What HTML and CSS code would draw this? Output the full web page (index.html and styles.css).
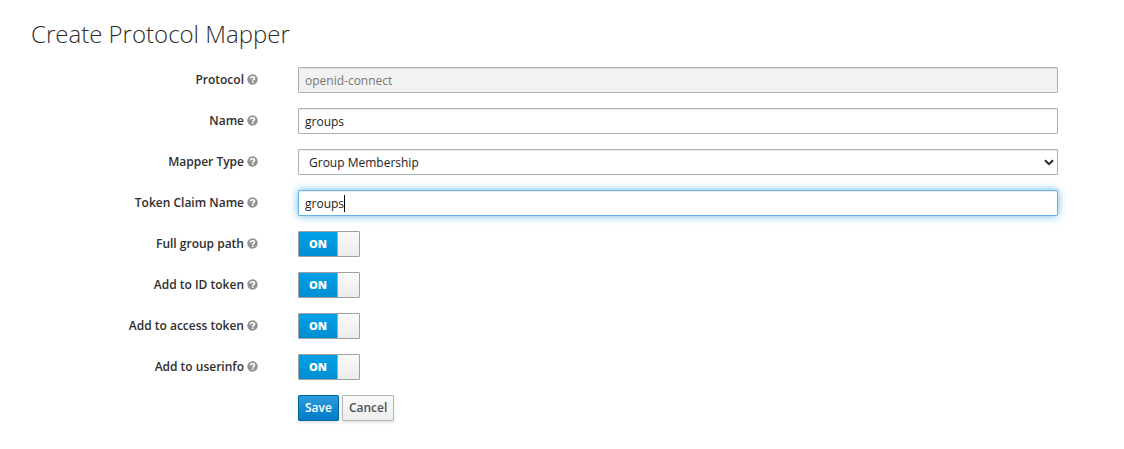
FILE: index.html
```html
<!DOCTYPE html>
<html lang="en">
<head>
<meta charset="utf-8">
<meta name="viewport" content="width=device-width, initial-scale=1">
<title>Create Protocol Mapper</title>
<link rel="stylesheet" href="styles.css">
</head>
<body>
<svg class="sprite" aria-hidden="true">
  <symbol id="help" viewBox="0 0 22 22">
    <circle cx="11" cy="11" r="10.400" fill="#939393"/>
    <path d="M6.600 8.600C7 6.200 8.600 5.400 11 5.400c2.400 0 4 1.200 4 3 0 2.600-3.600 2.600-3.600 5.200" fill="none" stroke="#fff" stroke-width="3.200"/>
    <rect x="9.800" y="14.800" width="3.200" height="3" fill="#fff"/>
  </symbol>
</svg>
<main class="page">
  <h1 class="title">Create Protocol Mapper</h1>
  <form class="form">
    <div class="row">
      <div class="caption"><label for="protocol">Protocol</label><svg class="help"><use href="#help"/></svg></div>
      <input class="field" id="protocol" type="text" value="openid-connect" disabled>
    </div>
    <div class="row">
      <div class="caption"><label for="name">Name</label><svg class="help"><use href="#help"/></svg></div>
      <input class="field" id="name" type="text" value="groups">
    </div>
    <div class="row">
      <div class="caption"><label for="type">Mapper Type</label><svg class="help"><use href="#help"/></svg></div>
      <div class="control">
        <select class="field field-select" id="type"><option>Group Membership</option></select>
        <svg class="chevron" viewBox="0 0 10 7" aria-hidden="true"><path d="M1 1.200L5 5.200L9 1.200" fill="none" stroke="#2b2b2b" stroke-width="2"/></svg>
      </div>
    </div>
    <div class="row">
      <div class="caption"><label for="claim">Token Claim Name</label><svg class="help"><use href="#help"/></svg></div>
      <div class="control">
        <input class="field field-active" id="claim" type="text" value="groups">
        <span class="caret" aria-hidden="true"></span>
      </div>
    </div>
    <div class="row">
      <div class="caption"><label for="path">Full group path</label><svg class="help"><use href="#help"/></svg></div>
      <div class="switch"><input class="switch-input" id="path" type="checkbox" checked><span class="switch-on">ON</span><span class="switch-knob"></span></div>
    </div>
    <div class="row">
      <div class="caption"><label for="idtoken">Add to ID token</label><svg class="help"><use href="#help"/></svg></div>
      <div class="switch"><input class="switch-input" id="idtoken" type="checkbox" checked><span class="switch-on">ON</span><span class="switch-knob"></span></div>
    </div>
    <div class="row">
      <div class="caption"><label for="access">Add to access token</label><svg class="help"><use href="#help"/></svg></div>
      <div class="switch"><input class="switch-input" id="access" type="checkbox" checked><span class="switch-on">ON</span><span class="switch-knob"></span></div>
    </div>
    <div class="row">
      <div class="caption"><label for="userinfo">Add to userinfo</label><svg class="help"><use href="#help"/></svg></div>
      <div class="switch"><input class="switch-input" id="userinfo" type="checkbox" checked><span class="switch-on">ON</span><span class="switch-knob"></span></div>
    </div>
    <div class="row">
      <span></span>
      <div class="actions">
        <button class="btn btn-primary" type="button">Save</button>
        <button class="btn" type="button">Cancel</button>
      </div>
    </div>
  </form>
</main>
</body>
</html>
```
FILE: styles.css
```css
* { box-sizing: border-box; }
body {
  margin: 0;
  background: #fff;
  color: #2e2e2e;
  font: 12px/20px "Open Sans", "Noto Sans", sans-serif;
}
.sprite { position: absolute; width: 0; height: 0; }
.page { padding: 20px 66px 28px 31px; }
.title { margin: 0 0 19px; font-size: 24px; line-height: 28px; font-weight: 300; }
.form { display: flex; flex-direction: column; gap: 15px; }
.row {
  display: grid;
  grid-template-columns: 227px minmax(0, 1fr);
  column-gap: 40px;
  min-height: 26px;
}
.caption {
  display: flex;
  align-items: center;
  justify-content: flex-end;
  gap: 3px;
  font-weight: 600;
}
.help { width: 11px; height: 11px; margin-bottom: 1px; }
.field {
  display: block;
  width: 100%;
  height: 26px;
  padding: 2px 6px;
  border: 1px solid #b0b0b0;
  border-radius: 1px;
  background: #fff;
  box-shadow: inset 0 1px 1px rgba(0, 0, 0, .075);
  color: #222;
  font: inherit;
  outline: 0;
}
.field:disabled { background: #f2f2f2; color: #777; }
.field-active {
  border-color: #66b4e3;
  box-shadow: inset 0 1px 1px rgba(0, 0, 0, .075), 0 0 8px rgba(0, 136, 206, .6);
}
.control { position: relative; }
.caret {
  position: absolute;
  top: 5px;
  left: 46px;
  width: 1px;
  height: 17px;
  background: #000;
  pointer-events: none;
}
.control:focus-within .caret { display: none; }
.field-select { appearance: none; padding: 3px 24px 3px 10px; }
.chevron {
  position: absolute;
  top: 10px;
  right: 4px;
  width: 10px;
  height: 7px;
  pointer-events: none;
}
.switch {
  position: relative;
  display: flex;
  width: 62px;
  height: 26px;
  border: 1px solid #a0a0a0;
  border-radius: 1px;
  overflow: hidden;
}
.switch-input {
  position: absolute;
  inset: 0;
  width: 100%;
  height: 100%;
  margin: 0;
  opacity: 0;
  cursor: pointer;
}
.switch-on {
  flex: 1;
  background: linear-gradient(#00a0e8, #008fd3);
  color: #fff;
  font-size: 11px;
  line-height: 24px;
  font-weight: 800;
  text-align: center;
}
.switch-knob {
  width: 22px;
  border-left: 1px solid #a8a8a8;
  background: linear-gradient(#fafafa, #ececec);
}
.actions { display: flex; gap: 3px; }
.btn {
  height: 26px;
  padding: 2px 6px;
  border: 1px solid #b7b7b7;
  border-radius: 1px;
  background: linear-gradient(#fafafa, #ededed);
  box-shadow: 0 2px 3px rgba(0, 0, 0, .1);
  color: #4d5258;
  font: 600 12px/20px "Open Sans", "Noto Sans", sans-serif;
}
.btn-primary {
  border-color: #00659c;
  background: linear-gradient(#2d9bdb, #007cc8);
  color: #fff;
}
```
